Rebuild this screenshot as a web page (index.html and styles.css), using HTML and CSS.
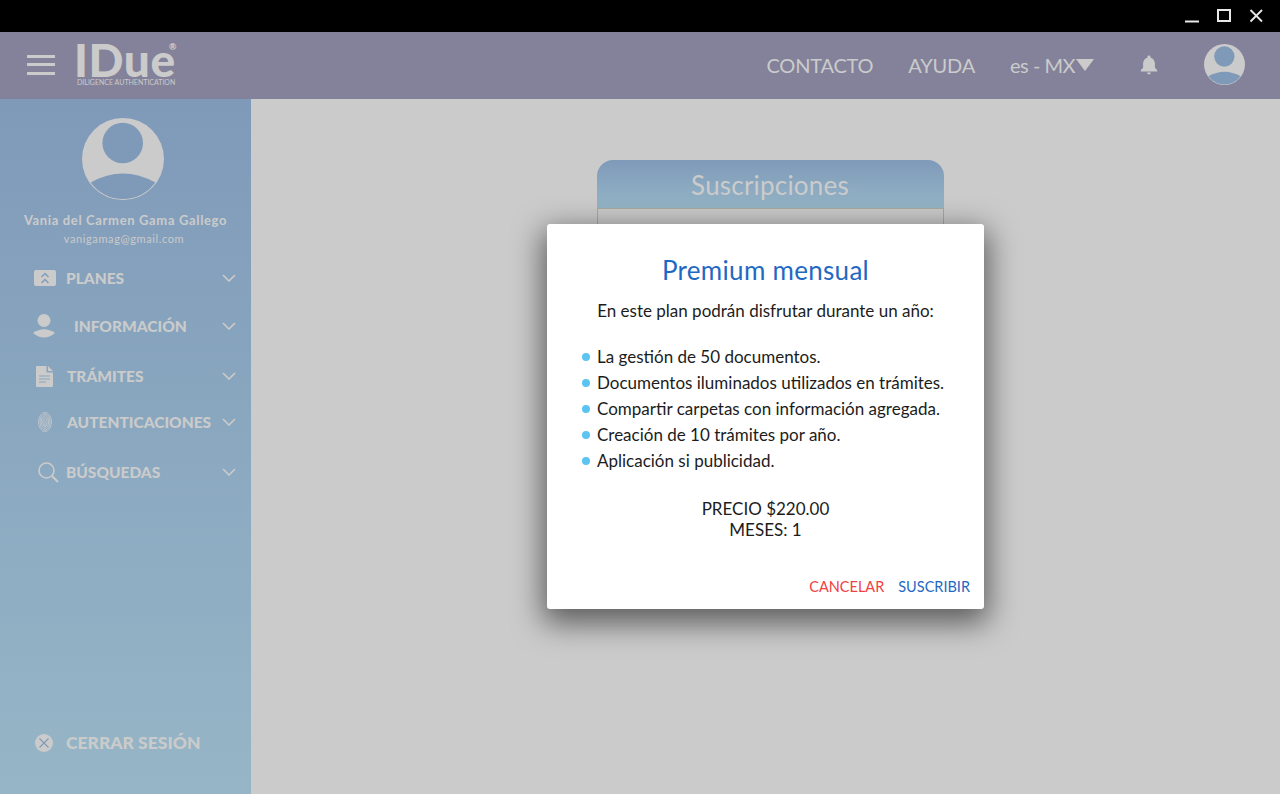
FILE: index.html
```html
<!DOCTYPE html>
<html lang="es">
<head>
    <meta charset="UTF-8">
    <meta name="viewport" content="width=device-width, initial-scale=1.0">
    <title>IDue</title>
    <link rel="stylesheet" href="styles.css">
</head>
<body>
    <!-- Window bar -->
    <div class="titlebar">
        <svg class="win-icon" width="16" height="14" viewBox="0 0 16 14"><path d="M1 12.500H15" stroke="#e8e8e8" stroke-width="2"/></svg>
        <svg class="win-icon" width="16" height="14" viewBox="0 0 16 14"><rect x="2" y="1" width="12" height="11" fill="none" stroke="#e8e8e8" stroke-width="2"/></svg>
        <svg class="win-icon" width="16" height="14" viewBox="0 0 16 14"><path d="M2.500 1L14 12.500M14 1L2.500 12.500" stroke="#e8e8e8" stroke-width="1.800"/></svg>
    </div>

    <!-- Top bar -->
    <header class="topbar">
        <div class="hamburger"><span></span><span></span><span></span></div>
        <div class="logo">
            <div class="logo-name">IDue<span class="logo-reg">®</span></div>
            <div class="logo-sub">DILIGENCE AUTHENTICATION</div>
        </div>
        <nav class="topnav">
            <a class="topnav-link">CONTACTO</a>
            <a class="topnav-link">AYUDA</a>
            <a class="topnav-lang">es - MX<span class="lang-arrow"></span></a>
            <svg class="bell" width="20" height="22" viewBox="0 0 20 22"><path d="M10 1.500c-1 0-1.600.7-1.600 1.600v.6C5.600 4.500 4.100 6.800 4.100 9.600v4.200L1.800 16.300v1.100h16.400v-1.100l-2.300-2.500V9.600c0-2.800-1.500-5.100-4.300-5.900v-.6c0-.9-.6-1.600-1.600-1.600zM8 18.500c0 1.100.9 1.900 2 1.900s2-.8 2-1.900z" fill="#cbcbcb"/></svg>
            <svg class="top-avatar" width="41" height="41" viewBox="0 0 82 82">
                <circle cx="41" cy="41" r="41" fill="#cbcbcb"/>
                <circle cx="40.700" cy="25" r="20.300" fill="#7f9ab9"/>
                <path d="M8.700 64.600Q41 46.600 73.300 64.600A40 40 0 0 1 8.700 64.600Z" fill="#7f9ab9"/>
            </svg>
        </nav>
    </header>

    <div class="app">
        <!-- Sidebar -->
        <aside class="sidebar">
            <svg class="side-avatar" width="82" height="82" viewBox="0 0 82 82">
                <circle cx="41" cy="41" r="41" fill="#cbcbcb"/>
                <circle cx="40.700" cy="25" r="20.300" fill="#7f9ab9"/>
                <path d="M8.700 64.600Q41 46.600 73.300 64.600A40 40 0 0 1 8.700 64.600Z" fill="#7f9ab9"/>
            </svg>
            <div class="user-name">Vania del Carmen Gama Gallego</div>
            <div class="user-mail">vanigamag@gmail.com</div>

            <ul class="side-menu">
                <li class="side-item item-planes">
                    <span class="side-icon">
                        <svg width="22" height="16" viewBox="0 0 22 16"><rect width="22" height="16" rx="2" fill="#cbcbcb"/><path d="M7.500 7L11 3.500 14.500 7M7.500 13L11 9.500 14.500 13" fill="none" stroke="#7f9ab9" stroke-width="1.300"/></svg>
                    </span>
                    <span class="side-label">PLANES</span>
                    <svg class="chevron" width="14" height="8" viewBox="0 0 14 8"><path d="M1 1L7 7 13 1" fill="none" stroke="#cbcbcb" stroke-width="1.600"/></svg>
                </li>
                <li class="side-item item-info">
                    <span class="side-icon">
                        <svg width="22" height="25" viewBox="0 0 22 25"><circle cx="11" cy="6.500" r="6.500" fill="#cbcbcb"/><path d="M0 19Q11 11.500 22 19 11 28 0 19Z" fill="#cbcbcb"/></svg>
                    </span>
                    <span class="side-label label-indent">INFORMACIÓN</span>
                    <svg class="chevron" width="14" height="8" viewBox="0 0 14 8"><path d="M1 1L7 7 13 1" fill="none" stroke="#cbcbcb" stroke-width="1.600"/></svg>
                </li>
                <li class="side-item item-tramites">
                    <span class="side-icon">
                        <svg width="17" height="21" viewBox="0 0 17 21"><path d="M1 0H10.500V6.500H17V20a1 1 0 0 1-1 1H1a1 1 0 0 1-1-1V1a1 1 0 0 1 1-1zM12 0L17 5H12z" fill="#cbcbcb"/><path d="M3 10H14M3 13H14M3 16H10" stroke="#8aa5be" stroke-width="1.200"/></svg>
                    </span>
                    <span class="side-label">TRÁMITES</span>
                    <svg class="chevron" width="14" height="8" viewBox="0 0 14 8"><path d="M1 1L7 7 13 1" fill="none" stroke="#cbcbcb" stroke-width="1.600"/></svg>
                </li>
                <li class="side-item item-auth">
                    <span class="side-icon">
                        <svg width="14" height="20" viewBox="0 0 14 20" fill="none" stroke="#cbcbcb" stroke-width=".8"><ellipse cx="7" cy="10" rx="6.500" ry="9.500"/><ellipse cx="7" cy="10" rx="5" ry="8"/><ellipse cx="7" cy="10" rx="3.500" ry="6.300"/><ellipse cx="7" cy="10" rx="2" ry="4.500"/><path d="M7 7.500V15"/></svg>
                    </span>
                    <span class="side-label">AUTENTICACIONES</span>
                    <svg class="chevron" width="14" height="8" viewBox="0 0 14 8"><path d="M1 1L7 7 13 1" fill="none" stroke="#cbcbcb" stroke-width="1.600"/></svg>
                </li>
                <li class="side-item item-busq">
                    <span class="side-icon">
                        <svg width="21" height="21" viewBox="0 0 21 21" fill="none" stroke="#cbcbcb"><circle cx="8.500" cy="8.500" r="7.500" stroke-width="1.600"/><path d="M14 14L20 20" stroke-width="2.200"/></svg>
                    </span>
                    <span class="side-label">BÚSQUEDAS</span>
                    <svg class="chevron" width="14" height="8" viewBox="0 0 14 8"><path d="M1 1L7 7 13 1" fill="none" stroke="#cbcbcb" stroke-width="1.600"/></svg>
                </li>
            </ul>

            <div class="logout">
                <svg width="18" height="18" viewBox="0 0 18 18"><circle cx="9" cy="9" r="9" fill="#cbcbcb"/><path d="M4.500 4.500L13.500 13.500M13.500 4.500L4.500 13.500" stroke="#7f9ab9" stroke-width="1.100"/></svg>
                <span class="logout-label">CERRAR SESIÓN</span>
            </div>
        </aside>

        <!-- Main -->
        <main class="content">
            <div class="card">
                <div class="card-head">Suscripciones</div>
                <div class="card-body"></div>
            </div>

            <!-- Dialog -->
            <div class="overlay">
                <div class="dialog">
                    <h2 class="dialog-title">Premium mensual</h2>
                    <p class="dialog-intro">En este plan podrán disfrutar durante un año:</p>
                    <ul class="dialog-list">
                        <li>La gestión de 50 documentos.</li>
                        <li>Documentos iluminados utilizados en trámites.</li>
                        <li>Compartir carpetas con información agregada.</li>
                        <li>Creación de 10 trámites por año.</li>
                        <li>Aplicación si publicidad.</li>
                    </ul>
                    <div class="dialog-price">PRECIO $220.00<br>MESES: 1</div>
                    <div class="dialog-actions">
                        <button class="btn-cancel">CANCELAR</button>
                        <button class="btn-ok">SUSCRIBIR</button>
                    </div>
                </div>
            </div>
        </main>
    </div>
</body>
</html>
```

FILE: styles.css
```css
* {
    box-sizing: border-box;
}
body {
    margin: 0;
    height: 794px;
    overflow: hidden;
    display: flex;
    flex-direction: column;
    font-family: Lato, "Noto Sans", sans-serif;
    background-color: #cbcbcb;
}
.titlebar {
    height: 32px;
    background-color: #000;
    display: flex;
    justify-content: flex-end;
    align-items: flex-start;
    gap: 16px;
    padding: 9px 16px 0 0;
}
/* Top bar */
.topbar {
    height: 67px;
    background-color: #83829a;
    display: flex;
    align-items: center;
    padding: 0 35px 2px 27px;
    color: #cbcbcb;
}
.hamburger {
    width: 28px;
    display: flex;
    flex-direction: column;
    gap: 5.500px;
    margin-right: 22px;
}
.hamburger span {
    height: 3px;
    background-color: #cbcbcb;
}
.logo {
    width: 100px;
    margin-top: -1px;
}
.logo-name {
    position: relative;
    margin-left: -3px;
    font-size: 46px;
    font-weight: 900;
    line-height: 37px;
    letter-spacing: 0.6px;
}
.logo-reg {
    position: absolute;
    top: 1px;
    left: 95px;
    font-size: 9px;
    line-height: 10px;
    letter-spacing: 0;
}
.logo-sub {
    font-size: 7px;
    line-height: 9px;
    letter-spacing: 0;
    white-space: nowrap;
}
.topnav {
    margin-left: auto;
    display: flex;
    align-items: center;
}
.topnav-link {
    font-size: 20px;
    letter-spacing: -0.2px;
    margin-right: 35px;
}
.topnav-lang {
    display: flex;
    align-items: center;
    font-size: 20px;
    letter-spacing: -0.5px;
    margin-right: 45px;
}
.lang-arrow {
    width: 0;
    height: 0;
    margin-left: 1px;
    border-left: 9px solid transparent;
    border-right: 9px solid transparent;
    border-top: 12px solid #cbcbcb;
}
.bell {
    margin-right: 45px;
}
/* Sidebar */
.app {
    flex: 1;
    display: flex;
    min-height: 0;
}
.sidebar {
    width: 251px;
    background: linear-gradient(#7f9ab9, #96b6c7);
    display: flex;
    flex-direction: column;
    align-items: center;
    color: #cbcbcb;
    padding-top: 19px;
}
.side-avatar {
    flex: none;
    margin-right: 6px;
}
.user-name {
    margin-top: 11px;
    font-size: 13px;
    font-weight: 700;
    line-height: 18px;
    letter-spacing: 0.65px;
}
.user-mail {
    margin-top: 2px;
    margin-right: 3px;
    font-size: 11px;
    line-height: 15px;
    letter-spacing: 0.6px;
}
.side-menu {
    list-style: none;
    margin: 0;
    padding: 0;
    width: 100%;
}
.side-item {
    display: flex;
    align-items: center;
    height: 30px;
    padding-left: 33px;
    padding-right: 15px;
}
.item-planes {
    margin-top: 17px;
}
.item-info {
    margin-top: 18px;
}
.item-tramites {
    margin-top: 20px;
}
.item-auth {
    margin-top: 16px;
}
.item-busq {
    margin-top: 20px;
}
.side-icon {
    width: 33px;
    display: flex;
    flex: none;
}
.item-planes .side-icon {
    padding-left: 1px;
}
.item-tramites .side-icon {
    padding-left: 3px;
    margin-right: 1px;
}
.item-auth .side-icon {
    padding-left: 5px;
    margin-right: 1px;
}
.item-busq .side-icon {
    padding-left: 5px;
}
.side-label {
    font-size: 15.5px;
    font-weight: 900;
    white-space: nowrap;
}
.label-indent {
    margin-left: 8px;
}
.chevron {
    margin-left: auto;
}
.logout {
    margin-top: auto;
    margin-bottom: 41px;
    width: 100%;
    padding-left: 35px;
    display: flex;
    align-items: center;
    gap: 13px;
}
.logout-label {
    font-size: 17.500px;
    font-weight: 900;
}
/* Main */
.content {
    flex: 1;
    position: relative;
    display: flex;
    flex-direction: column;
    align-items: center;
    padding: 61px 0 0 9px;
}
.card {
    width: 347px;
}
.card-head {
    height: 49px;
    border-radius: 16px 16px 0 0;
    background: linear-gradient(#7f9ab9, #94b4c6);
    border-bottom: 1px solid #a9a89f;
    color: #cbcbcb;
    font-size: 26px;
    line-height: 50px;
    letter-spacing: 0.2px;
    text-align: center;
}
.card-body {
    height: 300px;
    background-color: #cbcbcb;
    border: 1px solid #a8a8a8;
    border-top: none;
    border-bottom: none;
}
.overlay {
    position: absolute;
    inset: 0;
    display: flex;
    justify-content: center;
    align-items: flex-start;
    padding-top: 125px;
}
.dialog {
    width: 437px;
    height: 385px;
    background-color: #fff;
    border-radius: 3px;
    box-shadow: 0 10px 30px 4px rgba(0, 0, 0, 0.55);
    padding: 29px 14px 0 35px;
    color: #1c1c1c;
    display: flex;
    flex-direction: column;
}
.dialog-title {
    margin: 0 21px 0 0;
    font-size: 26px;
    font-weight: 400;
    line-height: 34px;
    text-align: center;
    color: #1f69c4;
    letter-spacing: 0.3px;
}
.dialog-intro {
    margin: 11px 21px 0 0;
    font-size: 17px;
    line-height: 26px;
    text-align: center;
}
.dialog-list {
    list-style: none;
    margin: 20px 0 0;
    padding: 0 0 0 15px;
    font-size: 17px;
    line-height: 26px;
}
.dialog-list li {
    position: relative;
    white-space: nowrap;
}
.dialog-list li::before {
    content: "";
    position: absolute;
    left: -15px;
    top: 9px;
    width: 8px;
    height: 8px;
    border-radius: 50%;
    background-color: #5cc4f2;
}
.dialog-price {
    margin: 24px 21px 0 0;
    font-size: 17px;
    line-height: 21px;
    text-align: center;
}
.dialog-actions {
    margin-top: auto;
    margin-bottom: 12px;
    display: flex;
    justify-content: flex-end;
    gap: 14px;
}
.dialog-actions button {
    border: none;
    background: none;
    padding: 0;
    font-family: inherit;
    font-size: 14.500px;
    line-height: 20px;
}
.btn-cancel {
    color: #f2403f;
}
.btn-ok {
    color: #1f69c4;
}
```
